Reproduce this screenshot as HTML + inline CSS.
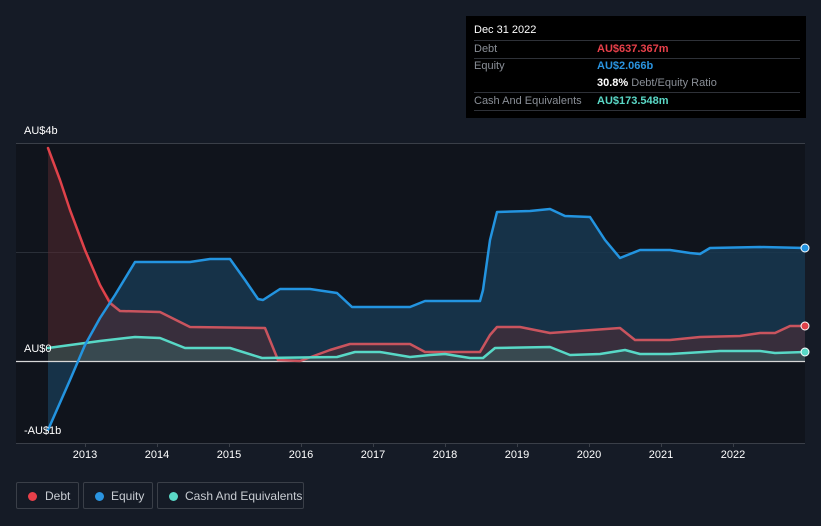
<!DOCTYPE html>
<html><head><meta charset="utf-8"><style>
body{margin:0;width:821px;height:526px;background:#151b26;font-family:"Liberation Sans",sans-serif;overflow:hidden;position:relative}
.lbl{position:absolute;color:#fff;font-size:11px}
.yr{position:absolute;top:449px;color:#fff;font-size:11px;width:40px;text-align:center}
.tt{position:absolute;left:466px;top:16px;width:340px;height:102px;background:#000;font-size:11px;color:#8a8f97}
.row{position:absolute;left:8px;right:6px;height:17px;border-bottom:1px solid #2e3138;line-height:17px}
.row span{position:absolute;left:123px;font-weight:bold}
.leg{position:absolute;top:482px;height:27px;border:1px solid #3a3f48;border-radius:2px;color:#c8ccd2;font-size:12px;line-height:27px;box-sizing:border-box}
.leg i{position:absolute;left:11px;top:9px;width:9px;height:9px;border-radius:50%}
</style></head><body>
<svg width="821" height="526" style="position:absolute;left:0;top:0">
<rect x="16" y="143" width="789" height="300" fill="#10141c"/>
<line x1="16" y1="143.5" x2="805" y2="143.5" stroke="#3a3f48"/>
<line x1="16" y1="252.5" x2="805" y2="252.5" stroke="#2a2f38"/>
<line x1="16" y1="443.5" x2="805" y2="443.5" stroke="#3a3f48"/>
<g stroke="#3a3f48"><line x1="85.5" y1="443" x2="85.5" y2="447"/><line x1="157.5" y1="443" x2="157.5" y2="447"/><line x1="229.5" y1="443" x2="229.5" y2="447"/><line x1="301.5" y1="443" x2="301.5" y2="447"/><line x1="373.5" y1="443" x2="373.5" y2="447"/><line x1="445.5" y1="443" x2="445.5" y2="447"/><line x1="517.5" y1="443" x2="517.5" y2="447"/><line x1="589.5" y1="443" x2="589.5" y2="447"/><line x1="661.5" y1="443" x2="661.5" y2="447"/><line x1="733.5" y1="443" x2="733.5" y2="447"/></g>
<polygon fill="#173750" fill-opacity="0.85" points="48,361 48,430 70,380 85,345 100,318 115,295 135,262 190,262 210,259 230,259 245,280 258,299 263,300 280,289 310,289 337,293 352,307 410,307 425,301 480,301 483,290 490,240 497,212 530,211 550,209 565,216 590,217 605,240 620,258 640,250 670,250 690,253 700,254 710,248 760,247 805,248 805,361"/>
<polygon fill="#5a2a30" fill-opacity="0.5" points="48,361 48,148 60,180 70,210 85,250 100,285 120,311 160,312 190,327 265,328 278,360 300,361 330,350 350,344 410,344 425,352 480,352 490,335 497,327 520,327 550,333 620,328 635,340 670,340 700,337 740,336 760,333 775,333 790,326 805,326 805,361"/>
<polygon fill="#3a6a68" fill-opacity="0.45" points="48,361 48,348 100,341 135,337 160,338 185,348 230,348 262,358 337,357 355,352 380,352 410,357 430,355 445,354 470,358 483,358 495,348 550,347 570,355 600,354 625,350 640,354 670,354 720,351 760,351 775,353 805,352 805,361"/>
<line x1="16" y1="361.5" x2="805" y2="361.5" stroke="#d8d8d8" stroke-width="1.2"/>
<g fill="none" stroke-width="2.5" stroke-linejoin="round" stroke-linecap="round">
<polyline stroke="#e0424a" points="48,148 60,180 70,210 85,250 100,285 110,303"/>
<polyline stroke="#c9545e" points="110,303 120,311 160,312 190,327 265,328 278,360 300,361 330,350 350,344 410,344 425,352 480,352 490,335 497,327 520,327 550,333 620,328 635,340 670,340 700,337 740,336 760,333 775,333 790,326 805,326"/>
<polyline stroke="#58d8c6" points="48,348 100,341 135,337 160,338 185,348 230,348 262,358 337,357 355,352 380,352 410,357 430,355 445,354 470,358 483,358 495,348 550,347 570,355 600,354 625,350 640,354 670,354 720,351 760,351 775,353 805,352"/>
<polyline stroke="#2394e0" points="48,430 70,380 85,345 100,318 115,295 135,262 190,262 210,259 230,259 245,280 258,299 263,300 280,289 310,289 337,293 352,307 410,307 425,301 480,301 483,290 490,240 497,212 530,211 550,209 565,216 590,217 605,240 620,258 640,250 670,250 690,253 700,254 710,248 760,247 805,248"/>
</g>
<circle cx="805" cy="248" r="4" fill="#2394e0" stroke="#fff" stroke-width="1"/>
<circle cx="805" cy="326" r="4" fill="#e0424a" stroke="#fff" stroke-width="1"/>
<circle cx="805" cy="352" r="4" fill="#58d8c6" stroke="#fff" stroke-width="1"/>
</svg>
<div class="lbl" style="left:24px;top:125px">AU$4b</div>
<div class="lbl" style="left:24px;top:343px">AU$0</div>
<div class="lbl" style="left:24px;top:425px">-AU$1b</div>
<div class="yr" style="left:65px">2013</div><div class="yr" style="left:137px">2014</div><div class="yr" style="left:209px">2015</div><div class="yr" style="left:281px">2016</div><div class="yr" style="left:353px">2017</div><div class="yr" style="left:425px">2018</div><div class="yr" style="left:497px">2019</div><div class="yr" style="left:569px">2020</div><div class="yr" style="left:641px">2021</div><div class="yr" style="left:713px">2022</div>
<div class="tt">
<div style="position:absolute;left:8px;top:8px;color:#fff">Dec 31 2022</div>
<div class="row" style="top:24px;border-top:1px solid #2e3138">Debt<span style="color:#e8404a">AU$637.367m</span></div>
<div class="row" style="top:42px;border-bottom:none">Equity<span style="color:#2a94e0">AU$2.066b</span></div>
<div class="row" style="top:59px"><span style="color:#fff">30.8% <b style="color:#8a8f97;font-weight:normal">Debt/Equity Ratio</b></span></div>
<div class="row" style="top:77px">Cash And Equivalents<span style="color:#5ad8c6">AU$173.548m</span></div>
</div>
<div class="leg" style="left:16px;width:63px"><i style="background:#e8404a"></i><span style="position:absolute;left:28px">Debt</span></div>
<div class="leg" style="left:83px;width:70px"><i style="background:#2a94e0"></i><span style="position:absolute;left:27px">Equity</span></div>
<div class="leg" style="left:157px;width:147px"><i style="background:#5ad8c6"></i><span style="position:absolute;left:27px">Cash And Equivalents</span></div>
</body></html>
